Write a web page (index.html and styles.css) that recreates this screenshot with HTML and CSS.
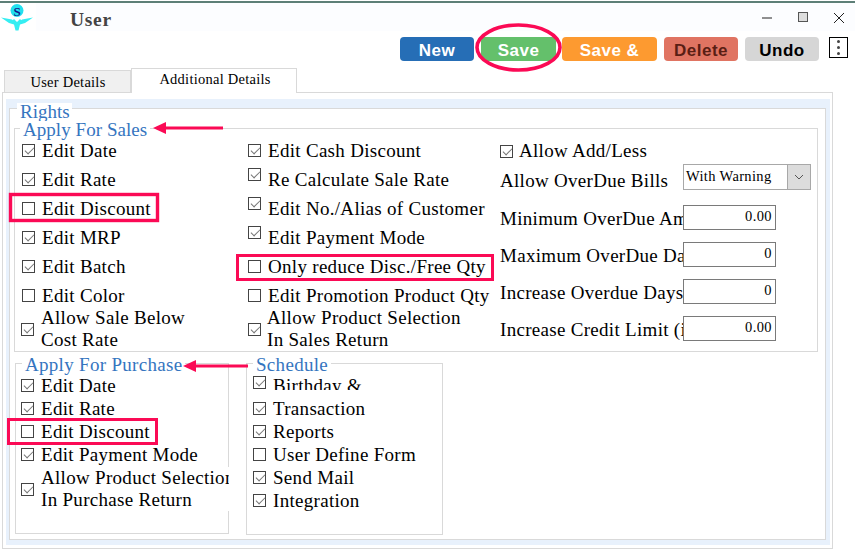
FILE: index.html
```html
<!DOCTYPE html>
<html lang="en">
<head>
<meta charset="utf-8">
<title>User</title>
<link rel="stylesheet" href="styles.css">
</head>
<body>
<div class="page">
  <div class="topline"></div>
  <header class="titlebar">
    <svg class="logo" width="36" height="28" viewBox="0 0 36 28">
      <circle cx="17" cy="7.5" r="6.5" fill="#22e0ee"/>
      <text x="17" y="12.5" text-anchor="middle" class="logo-s">S</text>
      <path d="M1 14.5 L12 16.5 L17 21 L22 16.5 L33 14.5 L25 20 L20 21.5 L18.5 27.5 L15.5 27.5 L14 21.5 L9 20 Z" fill="#35eef2"/>
      <path d="M11 19 L14 16 L17 19 L20 16 L23 19 L17 23 Z" fill="#35eef2"/>
    </svg>
    <h1 class="title">User</h1>
    <div class="winctl">
      <svg width="11" height="11" viewBox="0 0 11 11"><path d="M1 6H11" stroke="#222" stroke-width="1"/></svg>
      <svg width="11" height="11" viewBox="0 0 11 11"><rect x="1.5" y="0.5" width="9" height="9" fill="#ddd" stroke="#555"/></svg>
      <svg width="12" height="12" viewBox="0 0 12 12"><path d="M1 1L11 11M11 1L1 11" stroke="#222" stroke-width="1" fill="none"/></svg>
    </div>
  </header>

  <div class="toolbar">
    <button class="btn new">New</button>
    <button class="btn save">Save</button>
    <button class="btn saveand">Save &amp;</button>
    <button class="btn del">Delete</button>
    <button class="btn undo">Undo</button>
    <div class="kebab"><i></i><i></i><i></i></div>
  </div>

  <div class="tabs">
    <div class="tab">User Details</div>
    <div class="tab active">Additional Details</div>
  </div>

  <main class="panel">
    <div class="tint">
      <section class="rights">
        <div class="legend l-rights">Rights</div>
        <section class="sales">
          <div class="legend l-sales">Apply For Sales</div>
          <div class="sales-cols">
            <div class="col c1">
              <div class="row"><span class="cb on"></span>Edit Date</div>
              <div class="row"><span class="cb on"></span>Edit Rate</div>
              <div class="row"><span class="cb"></span>Edit Discount</div>
              <div class="row"><span class="cb on"></span>Edit MRP</div>
              <div class="row"><span class="cb on"></span>Edit Batch</div>
              <div class="row"><span class="cb"></span>Edit Color</div>
              <div class="two two-c1"><span class="cb on"></span><span>Allow Sale Below<br>Cost Rate</span></div>
            </div>
            <div class="col c2">
              <div class="row"><span class="cb on"></span>Edit Cash Discount</div>
              <div class="row"><span class="cb on hi"></span>Re Calculate Sale Rate</div>
              <div class="row"><span class="cb on hi"></span>Edit No./Alias of Customer</div>
              <div class="row"><span class="cb on hi"></span>Edit Payment Mode</div>
              <div class="row"><span class="cb"></span>Only reduce Disc./Free Qty</div>
              <div class="row"><span class="cb"></span>Edit Promotion Product Qty</div>
              <div class="two two-c2"><span class="cb on"></span><span>Allow Product Selection<br>In Sales Return</span></div>
            </div>
            <div class="col c3">
              <div class="row r-add"><span class="cb on"></span>Allow Add/Less</div>
              <div class="field f-sel">
                <span class="flabel">Allow OverDue Bills</span>
                <div class="select"><span class="sel-val">With Warning</span><span class="sel-btn"><svg width="10" height="6" viewBox="0 0 10 6"><path d="M1 1L5 5L9 1" fill="none" stroke="#555"/></svg></span></div>
              </div>
              <div class="field"><span class="flabel">Minimum OverDue Amount</span><input class="num" value="0.00" readonly></div>
              <div class="field"><span class="flabel">Maximum OverDue Days</span><input class="num" value="0" readonly></div>
              <div class="field"><span class="flabel">Increase Overdue Days</span><input class="num" value="0" readonly></div>
              <div class="field"><span class="flabel">Increase Credit Limit (in Days)</span><input class="num" value="0.00" readonly></div>
            </div>
          </div>
        </section>
        <div class="lower">
          <section class="purchase">
            <div class="legend l-purchase">Apply For Purchase</div>
            <div class="prow"><span class="cb on"></span>Edit Date</div>
            <div class="prow"><span class="cb on"></span>Edit Rate</div>
            <div class="prow"><span class="cb"></span>Edit Discount</div>
            <div class="prow"><span class="cb on"></span>Edit Payment Mode</div>
            <div class="two two-p"><span class="cb on"></span><span class="clip">Allow Product Selection<br>In Purchase Return</span></div>
          </section>
          <section class="schedule">
            <div class="legend l-schedule">Schedule</div>
            <div class="prow srow s-first"><span class="cb on hi"></span>Birthday &amp;</div>
            <div class="prow srow"><span class="cb on"></span>Transaction</div>
            <div class="prow srow"><span class="cb on"></span>Reports</div>
            <div class="prow srow"><span class="cb"></span>User Define Form</div>
            <div class="prow srow"><span class="cb on"></span>Send Mail</div>
            <div class="prow srow"><span class="cb on"></span>Integration</div>
          </section>
        </div>
      </section>
    </div>
  </main>

  <svg class="marks" width="855" height="549" viewBox="0 0 855 549">
    <ellipse cx="518.5" cy="47.5" rx="41.5" ry="22.5" fill="none" stroke="#fb0a55" stroke-width="3.6"/>
    <rect x="10.5" y="194.5" width="147" height="26" fill="none" stroke="#fb0a55" stroke-width="3.4"/>
    <rect x="237.5" y="255.5" width="255" height="24" fill="none" stroke="#fb0a55" stroke-width="3"/>
    <rect x="8.5" y="419.5" width="148" height="24" fill="none" stroke="#fb0a55" stroke-width="3"/>
    <path d="M223 128H164" stroke="#fb0a55" stroke-width="3"/>
    <path d="M153 128L166 122V134Z" fill="#fb0a55"/>
    <path d="M248 366H194" stroke="#fb0a55" stroke-width="3"/>
    <path d="M183 366L196 360V372Z" fill="#fb0a55"/>
  </svg>
</div>
</body>
</html>
```
FILE: styles.css
```css
* { box-sizing: border-box; }
html, body { margin: 0; padding: 0; background: #fff; }
body { width: 855px; height: 549px; overflow: hidden; font-family: "Liberation Serif", "Times New Roman", serif; color: #000; }
.page { position: relative; width: 855px; height: 549px; padding-top: 1px; }
.topline { height: 2px; background: #5d7f77; }

.titlebar { display: flex; height: 28px; background: #fcfdff; align-items: flex-start; }
.logo { display: block; flex: none; background: #fff; }
.logo-s { font: 13px "Liberation Serif", serif; font-weight: bold; fill: #14148c; }
.title { margin: 5px 0 0 34px; font-size: 19.5px; line-height: 24px; font-weight: bold; color: #444; letter-spacing: .7px; }
.winctl { margin-left: auto; display: flex; gap: 25px; padding: 9px 10px 0 0; }
.winctl svg { display: block; }

.toolbar { display: flex; height: 24px; margin-top: 6px; padding-left: 400px; }
.btn { height: 24px; width: 74px; margin: 0 7px 0 0; padding: 4px 0 0; border: 0; border-radius: 4px; font: bold 17px "Liberation Sans", Arial, sans-serif; letter-spacing: .5px; color: #fff; text-align: center; }
.new { background: #266eb6; }
.save { background: #64c06b; width: 75px; margin-right: 6px; }
.saveand { background: #fd9a30; width: 95px; }
.del { background: #e07462; color: #5a1e14; }
.undo { background: #d6d6d6; color: #000; margin-right: 10px; }
.kebab { width: 19px; height: 21px; border: 1px solid #000; display: flex; flex-direction: column; align-items: center; justify-content: center; gap: 3px; background: #fff; }
.kebab i { display: block; width: 3px; height: 3px; border-radius: 50%; background: #444; }

.tabs { display: flex; align-items: flex-end; height: 24px; margin-top: 7px; padding-left: 4px; }
.tab { width: 127px; height: 22px; background: #f0f0f0; border: 1px solid #d9d9d9; border-bottom: 0; padding-left: 1px; text-align: center; font-size: 14.5px; line-height: 22px; letter-spacing: .25px; }
.tab.active { width: 166px; height: 25px; margin-bottom: -1px; background: #fff; padding-left: 2px; border-left: 1px solid #d9d9d9; position: relative; z-index: 1; line-height: 20px; }

.panel { width: 831px; height: 457px; margin-left: 2px; border: 1px solid #d9d9d9; padding: 6px 2px 2px 3px; background: #fff; }
.tint { height: 446px; width: 824px; background: #e8f1fc; padding: 9px 4px 0 3px; }
.rights { height: 432px; border: 1px solid #d9d9d9; background: #fff; padding: 0 7px 0 4px; }

.legend { width: fit-content; background: #fff; color: #3575bf; font-size: 19px; letter-spacing: .3px; padding: 0 3px; }
.l-rights { height: 18px; line-height: 18px; margin: -6px 0 0 3px; overflow: hidden; padding: 0 2px 0 3px; letter-spacing: 0; }
.sales { height: 224px; margin-top: 7px; border: 1px solid #d9d9d9; }
.l-sales { height: 18px; line-height: 16px; margin: -7px 0 -4px 5px; padding: 0 3px; position: relative; letter-spacing: .05px; }
.sales-cols { display: flex; padding-left: 7px; }
.col { flex: none; }
.c1 { width: 226px; }
.c2 { width: 252px; }
.c3 { width: 320px; }

.row { display: flex; align-items: center; height: 29px; font-size: 19px; letter-spacing: .3px; white-space: nowrap; }
.cb { flex: none; position: relative; width: 13px; height: 13px; margin-right: 7px; border: 1px solid #444; background: #fff; }
.cb.on::after { content: ""; position: absolute; left: 2px; top: 2px; width: 8px; height: 4px; border-left: 1px solid #777; border-bottom: 1px solid #777; transform: rotate(-45deg); }
.cb.hi { top: -5px; }

.two { display: flex; align-items: center; height: 44px; margin-top: -3px; font-size: 19px; line-height: 22px; letter-spacing: .3px; background: #fff; white-space: nowrap; }
.two-c1 { width: 172px; margin-left: -2px; padding-left: 1px; }
.two-c2 { width: 220px; margin-left: -1px; padding-left: 1px; }
.two-c2 .cb { margin-right: 6px; }

.r-add { height: 28px; padding-top: 2px; }
.r-add .cb { margin-right: 6px; }
.field { display: flex; height: 25px; margin-bottom: 12px; font-size: 19px; letter-spacing: .3px; }
.f-sel { height: 26px; margin-bottom: 15px; }
.f-sel .flabel { padding-top: 5px; }
.flabel { width: 183px; flex: none; overflow: hidden; white-space: nowrap; line-height: 24px; padding-top: 2px; height: 29px; }
.num { width: 93px; height: 25px; border: 1px solid #7a7a7a; padding: 0 3px 3px 0; background: #fff; text-align: right; font: 14.5px "Liberation Serif", serif; letter-spacing: .4px; color: #000; outline: 0; }
.select { display: flex; width: 128px; height: 26px; border: 1px solid #a8a8a8; background: #fff; }
.sel-val { flex: 1; font-size: 14.5px; line-height: 22px; padding-left: 2px; letter-spacing: .35px; }
.sel-btn { width: 23px; display: flex; align-items: center; justify-content: center; background: #dcdcdc; border-left: 1px solid #a8a8a8; }

.lower { display: flex; margin-top: 11px; margin-left: 1px; }
.purchase { width: 214px; height: 171px; border: 1px solid #d9d9d9; }
.schedule { width: 197px; height: 172px; margin-left: 17px; border: 1px solid #d9d9d9; }
.l-purchase { height: 16px; line-height: 14px; margin: -6px 0 0 6px; padding: 0 3px; white-space: nowrap; }
.l-schedule { height: 16px; line-height: 14px; margin: -6px 0 0 6px; padding: 0 3px; }
.prow { display: flex; align-items: center; height: 23px; padding-left: 5px; font-size: 19px; letter-spacing: .3px; white-space: nowrap; }
.two-p { width: 208px; margin: 1px 0 0 5px; position: relative; overflow: hidden; }
.clip { display: block; overflow: hidden; }
.srow { padding-left: 6px; }
.srow .cb { margin-right: 7px; }
.l-schedule + .srow { height: 16px; margin-bottom: 7px; overflow: hidden; align-items: flex-start; line-height: 24px; }
.s-first .cb { top: 2px; }

.marks { position: absolute; left: 0; top: 0; pointer-events: none; }
```
